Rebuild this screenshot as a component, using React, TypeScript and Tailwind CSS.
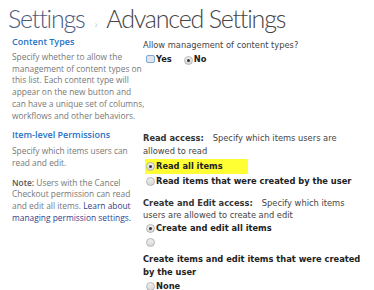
import React from 'react';

const sans = { fontFamily: '"Open Sans", "Noto Sans", sans-serif' };
const verdana = { fontFamily: '"DejaVu Sans", Verdana, sans-serif' };

function Radio({ checked = false }: { checked?: boolean }) {
  return (
    <span className="inline-flex h-[9px] w-[9px] shrink-0 items-center justify-center rounded-full border border-[#b5b5b5] bg-gradient-to-b from-[#f0f0f0] to-[#d8d8d8]">
      {checked && <span className="h-[3px] w-[3px] rounded-full bg-[#333]" />}
    </span>
  );
}

export default function App() {
  return (
    <div className="h-[290px] w-[374px] overflow-hidden bg-white">
      <div className="flex h-[35px] items-baseline whitespace-nowrap pl-[8px] pt-[2px] text-[25px] font-light leading-[33px] tracking-[-1.2px]" style={{ fontFamily: 'Lato, "Open Sans", sans-serif' }}>
        <span className="text-[#4d5a80]">Settings</span>
        <span className="ml-[10px] mr-[10px] text-[11px] text-[#999]">›</span>
        <span className="text-[#444]">Advanced Settings</span>
      </div>

      <div className="flex">
        {/* left descriptions */}
        <div className="w-[131px] shrink-0 whitespace-nowrap pl-[12px] text-[8.4px] leading-[11.7px] text-[#777]" style={sans}>
          <div className="text-[9px] font-semibold leading-[14px] text-[#1f73c4]">Content Types</div>
          <p className="mt-[2px]">
            Specify whether to allow the<br />
            management of content types on<br />
            this list. Each content type will<br />
            appear on the new button and<br />
            can have a unique set of columns,<br />
            workflows and other behaviors.
          </p>
          <div className="mt-[7px] text-[9px] font-semibold leading-[14px] text-[#1f73c4]">Item-level Permissions</div>
          <p className="mt-[3px]">Specify which items users can<br />read and edit.</p>
          <p className="mt-[8px]">
            <span className="font-semibold text-[#555]">Note:</span> Users with the Cancel<br />
            Checkout permission can read<br />
            and edit all items. <span className="text-[#2e3f8f]">Learn about</span><br />
            <span className="text-[#2e3f8f]">managing permission settings.</span>
          </p>
        </div>

        {/* right controls */}
        <div className="flex-1 whitespace-nowrap pl-[12px] pt-[4px] text-[8.3px] text-[#444]" style={verdana}>
          <div className="leading-[12px]">Allow management of content types?</div>
          <div className="mt-[2px] flex items-center pl-[3px] font-bold leading-[12px] text-[#222]">
            <span className="mr-[1px] h-[8px] w-[9px] rounded-[2px] border border-[#7aa7e0] bg-[#e4e4e4]" />
            Yes
            <span className="ml-[12px] mr-[1px]"><Radio checked /></span>
            No
          </div>

          <div className="mt-[67px] leading-[13px]">
            <span className="font-bold text-[#333]">Read access:</span>
            <span className="ml-[9px]">Specify which items users are</span>
            <br />allowed to read
          </div>
          <div className="mt-[1px] flex items-center pl-[3px] font-bold leading-[15px] text-[#222]">
            <span className="-ml-[1px] flex w-[103px] items-center bg-[#ffff33] pl-[1px]">
              <Radio checked />
              <span className="ml-[1px]">Read all items</span>
            </span>
          </div>
          <div className="flex items-center pl-[3px] font-bold leading-[15px] text-[#222]">
            <Radio />
            <span className="ml-[1px]">Read items that were created by the user</span>
          </div>

          <div className="mt-[8px] leading-[12px]">
            <span className="font-bold text-[#333]">Create and Edit access:</span>
            <span className="ml-[9px]">Specify which items</span>
            <br />users are allowed to create and edit
          </div>
          <div className="flex items-center pl-[3px] font-bold leading-[14px] text-[#222]">
            <Radio checked />
            <span className="ml-[1px]">Create and edit all items</span>
          </div>
          <div className="flex h-[14px] items-center pl-[3px]">
            <Radio />
          </div>
          <div className="mt-[4px] font-bold leading-[13px] text-[#222]">
            Create items and edit items that were created<br />by the user
          </div>
          <div className="flex items-center pl-[3px] font-bold leading-[14px] text-[#222]">
            <Radio />
            <span className="ml-[1px]">None</span>
          </div>
        </div>
      </div>
    </div>
  );
}
